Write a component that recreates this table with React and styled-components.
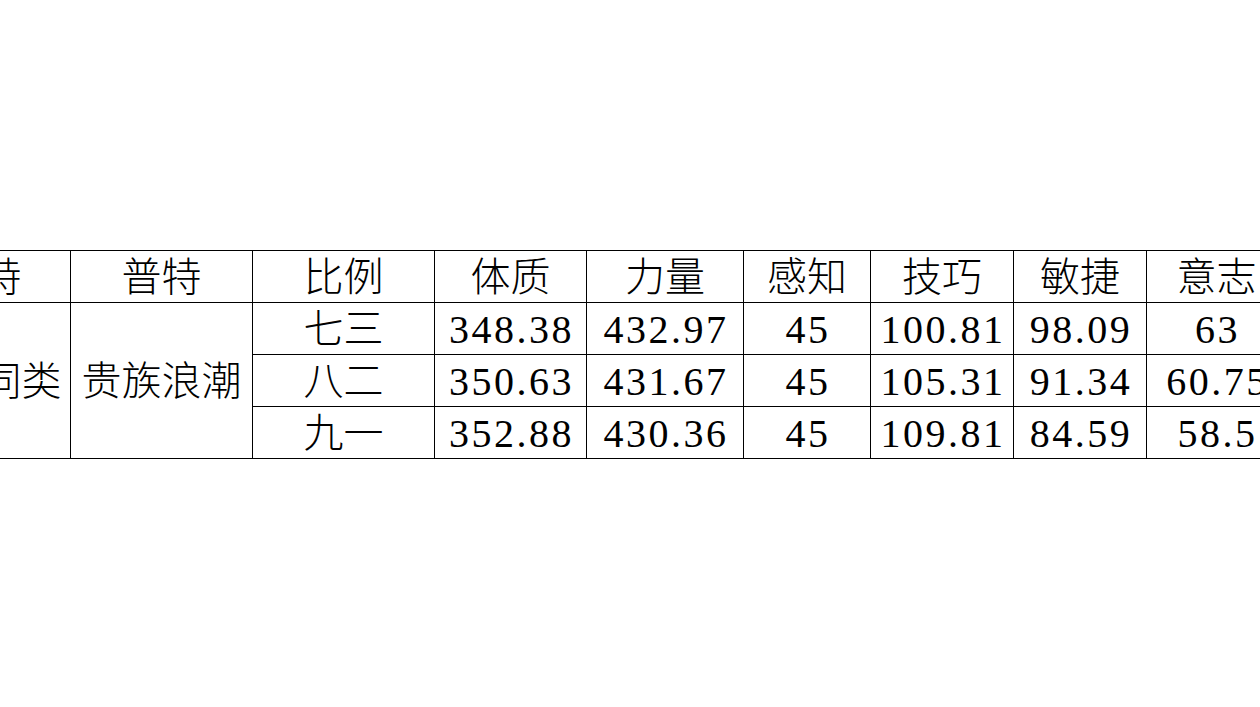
import React from 'react';
import styled, { createGlobalStyle } from 'styled-components';

const GlobalStyle = createGlobalStyle`
  html, body {
    margin: 0;
    padding: 0;
    background: #ffffff;
  }
`;

const PAGE = styled.div`
  box-sizing: border-box;
  width: 100vw;
  height: 100vh;
  padding-top: 1px;
  overflow: hidden;
  display: flex;
  align-items: center;
`;

const TABLE = styled.table`
  border-collapse: collapse;
  table-layout: fixed;
  margin-left: -108px;
  flex-shrink: 0;
  color: #000;
  font-family: "Liberation Serif", "Noto Sans CJK SC", sans-serif;
  font-size: 40px;
  font-weight: 300;
`;

const CELL = styled.td`
  border: 1px solid #000;
  height: 52px;
  padding: 3px 0 0;
  box-sizing: border-box;
  text-align: center;
  vertical-align: middle;
  white-space: nowrap;
  overflow: hidden;
  line-height: 1;
  letter-spacing: ${(p) => (p.$num ? '2.5px' : '0')};
  text-indent: ${(p) => (p.$num ? '2px' : '0')};
`;

const HEAD = styled(CELL).attrs({ as: 'th' })`
  font-weight: 300;
`;

const columns = [
  { name: '奇特', width: 178 },
  { name: '普特', width: 182 },
  { name: '比例', width: 182 },
  { name: '体质', width: 152 },
  { name: '力量', width: 157 },
  { name: '感知', width: 127 },
  { name: '技巧', width: 143 },
  { name: '敏捷', width: 133 },
  { name: '意志', width: 140 },
  { name: '魅力', width: 130 },
];

const rows = [
  ['七三', '348.38', '432.97', '45', '100.81', '98.09', '63', '45'],
  ['八二', '350.63', '431.67', '45', '105.31', '91.34', '60.75', '45'],
  ['九一', '352.88', '430.36', '45', '109.81', '84.59', '58.5', '45'],
];

const App = () => {
  return (
    <PAGE>
      <GlobalStyle />
      <TABLE>
        <colgroup>
          {columns.map((c) => (
            <col key={c.name} style={{ width: c.width }} />
          ))}
        </colgroup>
        <thead>
          <tr>
            {columns.map((c) => (
              <HEAD key={c.name}>{c.name}</HEAD>
            ))}
          </tr>
        </thead>
        <tbody>
          {rows.map((r, i) => (
            <tr key={r[0]}>
              {i === 0 ? (
                <>
                  <CELL rowSpan={3}>贵族同类</CELL>
                  <CELL rowSpan={3}>贵族浪潮</CELL>
                </>
              ) : null}
              {r.map((v, j) => (
                <CELL key={j} $num={j > 0}>{v}</CELL>
              ))}
            </tr>
          ))}
        </tbody>
      </TABLE>
    </PAGE>
  );
};

export default App;
